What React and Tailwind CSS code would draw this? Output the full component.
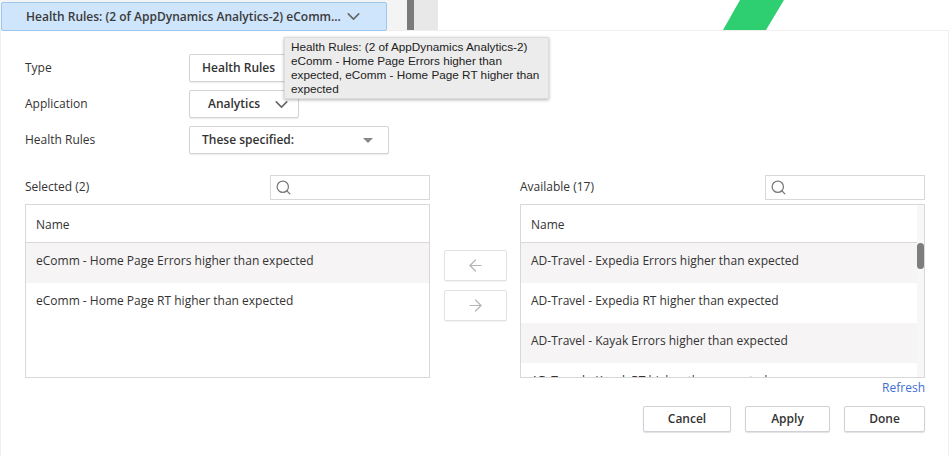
import React from 'react';
import { ChevronDown, ArrowLeft, ArrowRight, Search } from 'lucide-react';

const selected = [
  'eComm - Home Page Errors higher than expected',
  'eComm - Home Page RT higher than expected',
];

const available = [
  'AD-Travel - Expedia Errors higher than expected',
  'AD-Travel - Expedia RT higher than expected',
  'AD-Travel - Kayak Errors higher than expected',
  'AD-Travel - Kayak RT higher than expected',
];

const FormRow = ({ label, children }) => (
  <div className="flex items-center h-7">
    <span className="w-[164px] text-[12px] text-[#333]">{label}</span>
    {children}
  </div>
);

const SelectBox = ({ className, children }) => (
  <div className={`h-7 flex items-center bg-white border border-[#d4d4d4] rounded-[2px] shadow-[0_1px_1px_rgba(0,0,0,0.08)] text-[12px] font-semibold text-[#333] ${className}`}>
    {children}
  </div>
);

const ListPanel = ({ title, rows, scroll }) => (
  <div className="w-[405px] flex flex-col">
    <div className="h-[25px] flex items-center justify-between">
      <span className="mb-[2px] text-[12px] text-[#333]">{title}</span>
      <div className="w-[160px] h-[25px] border border-[#d8d8d8] flex items-center pl-[4px]">
        <Search size={17} strokeWidth={1.75} className="text-[#777]" />
      </div>
    </div>
    <div className="mt-[4px] h-[174px] border border-[#d8d8d8] flex overflow-hidden">
      <div className="flex-1 min-w-0">
        <div className="h-[38px] flex items-center px-[10px] pt-[2px] border-b border-[#d8d8d8] text-[12px] text-[#333]">Name</div>
        {rows.map((row, i) => (
          <div key={row} className={`h-10 flex items-center px-[10px] pb-[4px] text-[12px] text-[#333] whitespace-nowrap ${i % 2 === 0 ? 'bg-[#f6f4f5]' : 'bg-white'}`}>
            {row}
          </div>
        ))}
      </div>
      {scroll && (
        <div className="w-[7px] bg-[#f7f7f7] pt-[38px] flex flex-col items-center shrink-0">
          <div className="w-[7px] h-[26px] rounded-[4px] bg-[#7d7d7d]" />
        </div>
      )}
    </div>
  </div>
);

const MoveButton = ({ icon: Icon }) => (
  <div className="w-[63px] h-[31px] flex items-center justify-center bg-white border border-[#e2e2e2] rounded-[2px] shadow-[0_1px_1px_rgba(0,0,0,0.05)]">
    <Icon size={19} strokeWidth={1.5} className="text-[#b5b5b5]" />
  </div>
);

const FooterButton = ({ className, children }) => (
  <div className={`h-[26px] flex items-center justify-center bg-white border border-[#d0d0d6] rounded-[2px] shadow-[0_1px_1px_rgba(0,0,0,0.12)] text-[12px] font-semibold text-[#333] ${className}`}>
    {children}
  </div>
);

export default function App() {
  return (
    <div className="relative w-[952px] h-[456px] overflow-hidden bg-white font-['Open_Sans',sans-serif]">
      {/* Top strip */}
      <div className="h-[30px] flex">
        <div className="w-[407px] h-full bg-[#f4f4f4] pl-px pt-[2px]">
          <div className="w-[386px] h-[29px] relative z-10 flex items-center pl-[24px] bg-[#cfe5fb] border border-[#9cc6ec] rounded-[2px] text-[12px] font-semibold text-[#3a3a3a]">
            <span className="whitespace-nowrap">Health Rules: (2 of AppDynamics Analytics-2) eComm...</span>
            <ChevronDown size={21} strokeWidth={1.8} className="ml-[2px] text-[#666]" />
          </div>
        </div>
        <div className="w-[7px] h-full bg-[#7b7b7b]" />
        <div className="w-[24px] h-full bg-[#e8e8e8]" />
        <div className="flex-1 h-full bg-white">
          <svg width="514" height="30" className="block">
            <polygon points="302,0 346,0 328,30 285,30" fill="#2ecf70" />
          </svg>
        </div>
      </div>

      {/* Panel */}
      <div className="w-[949px] h-[426px] bg-white border-l border-r border-t border-[#efefef] pl-[24px] pr-[23px] pt-[23px]">
        <div className="flex flex-col gap-2">
          <FormRow label="Type">
            <SelectBox className="w-[130px] pl-3">Health Rules</SelectBox>
          </FormRow>
          <FormRow label="Application">
            <SelectBox className="w-[110px] pl-[18px]">
              Analytics
              <ChevronDown size={21} strokeWidth={1.8} className="ml-[11px] text-[#666]" />
            </SelectBox>
          </FormRow>
          <FormRow label="Health Rules">
            <SelectBox className="w-[200px] pl-3 pr-[15px] justify-between">
              These specified:
              <span className="w-0 h-0 border-x-[5px] border-x-transparent border-t-[5px] border-t-[#888]" />
            </SelectBox>
          </FormRow>
        </div>

        <div className="mt-[21px] flex">
          <ListPanel title="Selected (2)" rows={selected} />
          <div className="w-[90px] pt-[75px] flex flex-col items-center gap-[9px]">
            <MoveButton icon={ArrowLeft} />
            <MoveButton icon={ArrowRight} />
          </div>
          <ListPanel title="Available (17)" rows={available} scroll />
        </div>

        <div className="mt-[1px] text-right text-[12px] text-[#3f6fd1]">Refresh</div>

        <div className="mt-[9px] flex justify-end gap-[14px]">
          <FooterButton className="w-[88px]">Cancel</FooterButton>
          <FooterButton className="w-[85px]">Apply</FooterButton>
          <FooterButton className="w-[81px]">Done</FooterButton>
        </div>
      </div>

      {/* Tooltip */}
      <div className="absolute left-[284px] top-[37px] w-[265px] h-[62px] z-20 px-[6px] pt-[2px] bg-[#ececec] border border-[#dcdcdc] shadow-[0_1px_3px_rgba(0,0,0,0.3)] font-['Liberation_Sans',sans-serif] text-[11.75px] leading-[14px] text-[#222] whitespace-nowrap">
        Health Rules: (2 of AppDynamics Analytics-2)
        <br />
        eComm - Home Page Errors higher than
        <br />
        expected, eComm - Home Page RT higher than
        <br />
        expected
      </div>
    </div>
  );
}
